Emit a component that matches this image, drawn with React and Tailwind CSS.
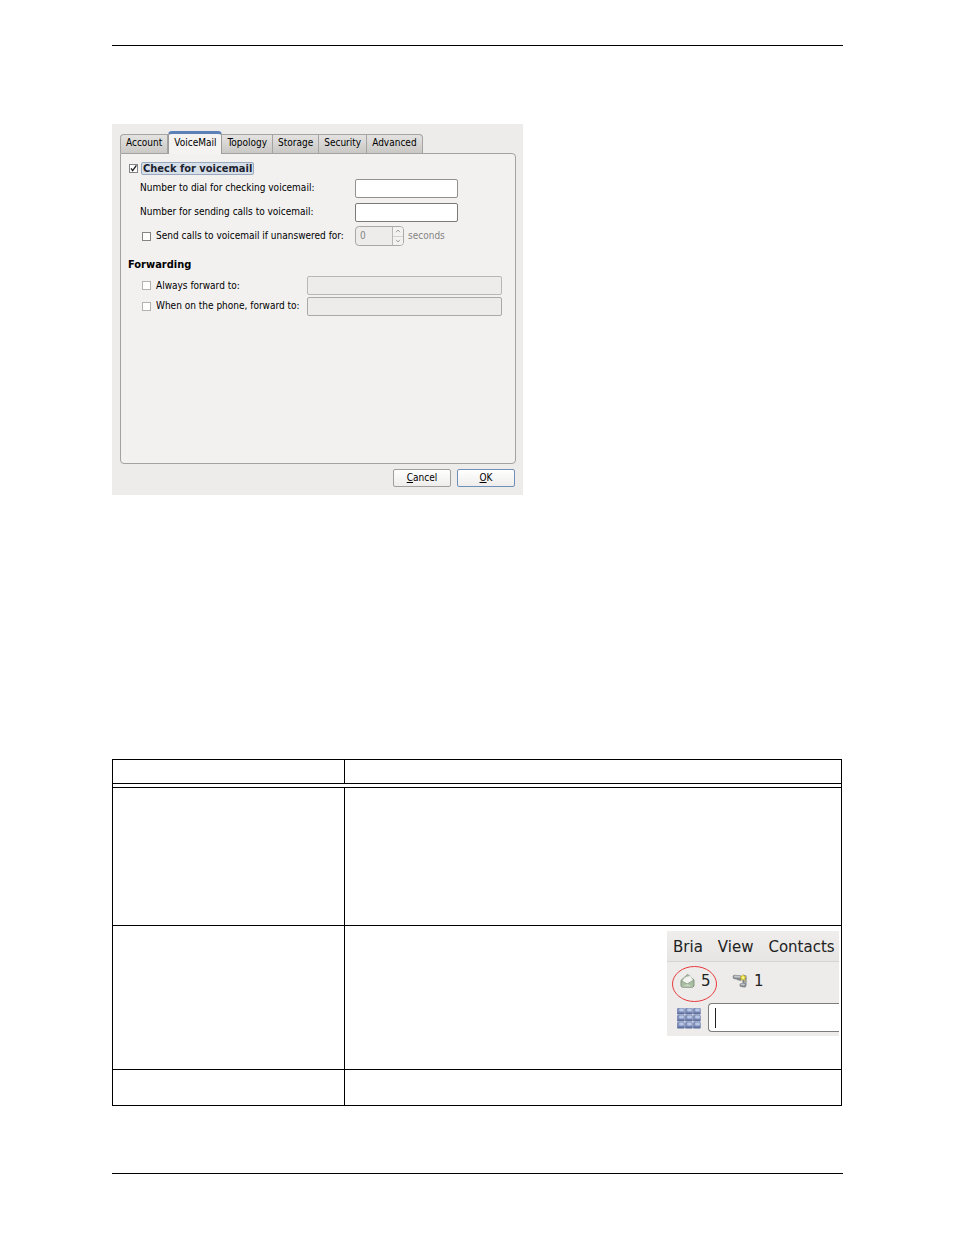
import React from "react";

const UI = "font-['DejaVu_Sans_Condensed','DejaVu_Sans',sans-serif]";

const TABS = ["Account", "VoiceMail", "Topology", "Storage", "Security", "Advanced"];

function Tab({ label, active }) {
  if (active) {
    return (
      <button
        type="button"
        role="tab"
        aria-selected="true"
        className="z-10 -mb-px flex h-[23px] items-center rounded-t-sm border border-b-0 border-t-[3px] border-[#9d9c9b] border-t-[#5b82b8] bg-[#f4f3f2] px-[5px] pb-0.5"
      >
        {label}
      </button>
    );
  }
  return (
    <button
      type="button"
      role="tab"
      aria-selected="false"
      className="flex h-[19px] items-center border border-b-0 border-l-0 border-[#a5a4a2] bg-linear-to-b from-[#e4e3e1] to-[#c9c8c5] px-[5px] pb-0.5 first:rounded-tl-sm first:border-l last:rounded-tr-sm"
    >
      {label}
    </button>
  );
}

function Check({ id, checked, muted }) {
  return (
    <span className="relative flex size-[9px] shrink-0">
      <input
        id={id}
        type="checkbox"
        defaultChecked={checked}
        className={
          muted
            ? "size-[9px] appearance-none border border-[#b3b2b0] bg-white"
            : "size-[9px] appearance-none border border-[#858483] bg-white"
        }
      />
      {checked && (
        <svg viewBox="0 0 9 9" className="pointer-events-none absolute inset-0 size-[9px]" aria-hidden="true">
          <path d="M2 4.4 L3.7 6.6 L7.4 1.4" fill="none" stroke="#222" strokeWidth="1.4" />
        </svg>
      )}
    </span>
  );
}

function Dialog() {
  return (
    <section className={`${UI} w-[411px] max-w-full bg-[#edeceb] pr-[7px] pl-2 pt-[7px] pb-2 text-[10px] leading-3 text-black`}>
      <div role="tablist" className="flex items-end">
        {TABS.map((t) => (
          <Tab key={t} label={t} active={t === "VoiceMail"} />
        ))}
      </div>

      <div className="flex min-h-[311px] flex-col rounded-b-sm rounded-tr-sm border border-[#a3a2a0] bg-[#f2f1f0] pr-[13px] pt-2">
        <div className="flex h-[13px] items-center gap-[3px] pl-2">
          <Check id="vm" checked />
          <label
            htmlFor="vm"
            className="rounded-xs border border-[#98a9bf] bg-[#d7dfe8] px-px text-[11px] leading-[11px] font-bold text-[#1c2330]"
          >
            Check for voicemail
          </label>
        </div>

        <div className="mt-[3px] flex h-5 items-center pl-[19px]">
          <label htmlFor="dial" className="w-[215px]">Number to dial for checking voicemail:</label>
          <input id="dial" className="h-[19px] w-[103px] rounded-xs border border-[#92918f] bg-white px-1" />
        </div>
        <div className="mt-1 flex h-5 items-center pl-[19px]">
          <label htmlFor="send" className="w-[215px]">Number for sending calls to voicemail:</label>
          <input id="send" className="h-[19px] w-[103px] rounded-xs border border-[#7c7b79] bg-white px-1" />
        </div>
        <div className="mt-1 flex h-5 items-center pl-[21px]">
          <Check id="unanswered" />
          <label htmlFor="unanswered" className="ml-[5px] w-[199px]">Send calls to voicemail if unanswered for:</label>
          <div className="flex h-5 w-[49px] overflow-hidden rounded-sm border border-[#a9a8a6] bg-[#edeceb] text-[#858483]">
            <input aria-label="Seconds" defaultValue="0" disabled className="w-9 min-w-0 flex-1 pl-1" />
            <div className="flex w-[11px] flex-col border-l border-[#b9b8b6] bg-[#f3f2f1]">
              <button type="button" disabled aria-label="Increase" className="flex flex-1 items-center justify-center border-b border-[#d2d1cf]">
                <svg viewBox="0 0 6 4" className="h-1 w-1.5"><path d="M1 3.2 L3 1 L5 3.2" fill="none" stroke="#a3a2a0" /></svg>
              </button>
              <button type="button" disabled aria-label="Decrease" className="flex flex-1 items-center justify-center">
                <svg viewBox="0 0 6 4" className="h-1 w-1.5"><path d="M1 .8 L3 3 L5 .8" fill="none" stroke="#a3a2a0" /></svg>
              </button>
            </div>
          </div>
          <span className="ml-1 text-[#858483]">seconds</span>
        </div>

        <h2 className="mt-[13px] pl-[7px] text-[11px] leading-3 font-bold">Forwarding</h2>
        <div className="mt-1 flex h-[21px] items-center pl-[21px]">
          <Check id="always" muted />
          <label htmlFor="always" className="ml-[5px] w-[151px]">Always forward to:</label>
          <input aria-label="Always forward to number" disabled className="h-[19px] min-w-0 flex-1 rounded-xs border border-[#b8b7b5] bg-[#edeceb]" />
        </div>
        <div className="flex h-5 items-center pl-[21px]">
          <Check id="onphone" muted />
          <label htmlFor="onphone" className="ml-[5px] w-[151px]">When on the phone, forward to:</label>
          <input aria-label="When on the phone, forward to number" disabled className="h-[19px] min-w-0 flex-1 rounded-xs border border-[#aaa9a7] bg-[#edeceb]" />
        </div>
      </div>

      <div className="mt-[5px] flex justify-end gap-1.5 pr-px">
        <button type="button" className="h-[18px] w-[58px] rounded-xs border border-[#a09f9d] bg-linear-to-b from-white to-[#eeedec]">
          <u>C</u>ancel
        </button>
        <button type="button" className="h-[18px] w-[58px] rounded-xs border border-[#6f90bb] bg-linear-to-b from-white to-[#eeedec]">
          <u>O</u>K
        </button>
      </div>
    </section>
  );
}

function Envelope() {
  return (
    <svg viewBox="0 0 15 16" className="h-4 w-[15px]" aria-hidden="true">
      <path d="M1 7.4 L7.6 1.4 L14 6.8 V13 L12.8 14.2 H2.2 L1 13.2 Z" fill="#a9bda3" stroke="#7c8d77" strokeWidth=".9" />
      <path d="M2.6 7.4 L4.6 4.4 L10.4 2.6 L12.8 6.6 L11.8 8.4 L7.4 10.8 L3.2 9 Z" fill="#f3f4f0" stroke="#b9c0b5" strokeWidth=".5" />
      <path d="M1.4 8 L7.2 11 L13.6 7.4" fill="none" stroke="#8fa389" strokeWidth=".9" />
      <path d="M1.8 13.6 L7.3 11 L13 13.6 Z" fill="#c4d6bd" />
    </svg>
  );
}

function MissedCall() {
  return (
    <svg viewBox="0 0 16 16" className="size-4" aria-hidden="true">
      <g fill="none" strokeLinecap="round">
        <path d="M2.8 4 L8 4.4" stroke="#85898c" strokeWidth="4.4" />
        <path d="M6 6 L8.4 6.6" stroke="#85898c" strokeWidth="2.6" />
        <path d="M12.6 4.2 L12.4 11" stroke="#85898c" strokeWidth="4.2" />
        <path d="M9.6 12 L12.4 12.4" stroke="#85898c" strokeWidth="4.2" />
        <path d="M2.8 3.4 L7.4 3.7" stroke="#c3c7c9" strokeWidth="2" />
        <path d="M9.6 11.3 L12 11.6" stroke="#c3c7c9" strokeWidth="1.8" />
        <path d="M13 7.4 V9.4" stroke="#a9adb0" strokeWidth="1.6" />
      </g>
      <path d="M11 1.4 L12.2 3 L14.2 3.6 L13 5.2 L13.2 7.4 L11 6.6 L8.8 7.2 L9.2 5.2 L8.2 3.4 L10 3 Z" fill="#e3d72f" stroke="#b5a634" strokeWidth=".4" />
      <circle cx="11.1" cy="4.6" r="1.2" fill="#fdf9a4" />
    </svg>
  );
}

function Keypad() {
  const cells = [0, 1, 2];
  return (
    <svg viewBox="0 0 26 22" className="h-[22px] w-[26px]" aria-hidden="true">
      {cells.map((r) =>
        cells.map((c) => (
          <g key={`${r}${c}`} transform={`translate(${c * 8 + 1} ${r * 7 + 1})`}>
            <rect width="7.8" height="6.4" rx="1" fill="#8190b9" />
            <rect x="2.2" y=".4" width="4.6" height="3" rx="1" fill="#b5c6e6" />
            <rect x=".2" y="4.6" width="7.2" height="1.6" rx=".6" fill="#61719f" />
          </g>
        ))
      )}
    </svg>
  );
}

function PhoneWindow() {
  return (
    <div className="ml-auto w-[172px] overflow-hidden bg-[#edeceb] pb-1 font-['DejaVu_Sans',sans-serif] text-[15px] leading-5 text-[#222]">
      <nav className="flex h-[31px] items-center gap-[15px] border-b border-[#d6d5d3] bg-linear-to-b from-[#efeeed] to-[#e6e5e3] pt-0.5 pl-1.5">
        <a href="#bria">Bria</a>
        <a href="#view">View</a>
        <a href="#contacts">Contacts</a>
      </nav>
      <div className="relative flex h-[37px] items-center pl-[13px]">
        <Envelope />
        <span className="ml-1.5 w-[31px]">5</span>
        <MissedCall />
        <span className="ml-1.5">1</span>
        <svg viewBox="0 0 46 36" className="absolute top-1 left-[5px] h-9 w-[46px]" aria-hidden="true">
          <ellipse cx="22.5" cy="18" rx="22" ry="17.5" fill="none" stroke="#e8393c" strokeWidth="1" />
        </svg>
      </div>
      <div className="mt-1 flex items-center pl-[9px]">
        <Keypad />
        <label className="ml-1.5 flex h-[29px] min-w-0 flex-1 items-center rounded-l-sm border border-r-0 border-[#7d7c7a] bg-white pl-1.5">
          <span className="h-5 w-px bg-[#222]" />
          <input aria-label="Number or name" className="min-w-0 flex-1" />
        </label>
      </div>
    </div>
  );
}

export default function App() {
  return (
    <main className="min-h-screen bg-white pr-[111px] pb-[61px] pl-28 pt-[45px]">
      <hr className="border-t border-black" />
      <div className="mt-[78px]">
        <Dialog />
      </div>

      <div className="mt-[264px] pr-px">
        <table className="w-full table-fixed border-separate border-spacing-0 border-t border-l border-black">
          <colgroup>
            <col className="w-[232px]" />
            <col />
          </colgroup>
          <thead>
            <tr className="h-6">
              <th className="border-r border-b border-black p-0" />
              <th className="border-r border-b border-black p-0" />
            </tr>
            <tr className="h-1">
              <td colSpan="2" className="border-r border-b border-black p-0" />
            </tr>
          </thead>
          <tbody>
            <tr className="h-[138px]">
              <td className="border-r border-b border-black p-0" />
              <td className="border-r border-b border-black p-0" />
            </tr>
            <tr className="h-36">
              <td className="border-r border-b border-black p-0" />
              <td className="border-r border-b border-black p-0 pt-[5px] pr-0.5 align-top">
                <PhoneWindow />
              </td>
            </tr>
            <tr className="h-9">
              <td className="border-r border-b border-black p-0" />
              <td className="border-r border-b border-black p-0" />
            </tr>
          </tbody>
        </table>
      </div>

      <hr className="mt-[67px] border-t border-black" />
    </main>
  );
}
